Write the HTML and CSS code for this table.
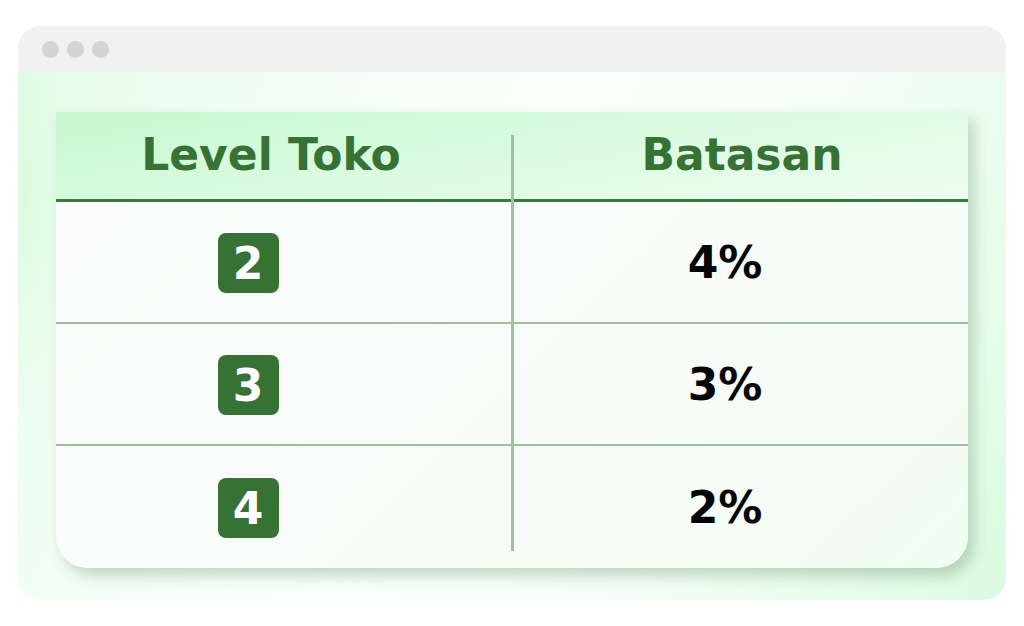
FILE: index.html
```html
<!DOCTYPE html>
<html>
<head>
<meta charset="utf-8">
<link rel="stylesheet" href="styles.css">
</head>
<body>
<div class="page">
  <div class="window">
    <div class="titlebar">
      <span class="dot"></span><span class="dot"></span><span class="dot"></span>
    </div>
    <div class="content">
      <div class="card">
        <div class="row head">
          <div class="cell"><span class="label left">Level Toko</span></div>
          <div class="cell"><span class="label">Batasan</span></div>
        </div>
        <div class="row">
          <div class="cell"><span class="badge">2</span></div>
          <div class="cell"><span class="pct">4%</span></div>
        </div>
        <div class="row">
          <div class="cell"><span class="badge">3</span></div>
          <div class="cell"><span class="pct">3%</span></div>
        </div>
        <div class="row last">
          <div class="cell"><span class="badge">4</span></div>
          <div class="cell"><span class="pct">2%</span></div>
        </div>
        <div class="divider"></div>
      </div>
    </div>
  </div>
</div>
</body>
</html>
```
FILE: styles.css
```css
* { box-sizing: border-box; }
html, body { margin: 0; padding: 0; background: #ffffff; }
body { font-family: "DejaVu Sans", "Liberation Sans", sans-serif; }
.page { width: 1024px; height: 626px; padding: 26px 18px; }
.window {
  width: 988px; height: 574px;
  border-radius: 22px;
  overflow: hidden;
  display: flex; flex-direction: column;
}
.titlebar {
  height: 46px; background: #f1f1f1;
  display: flex; align-items: center; gap: 8px;
  padding-left: 24px;
}
.dot { width: 17px; height: 17px; border-radius: 50%; background: #d4d4d6; }
.content {
  flex: 1;
  padding: 40px 38px 32px 38px;
  background:
    radial-gradient(ellipse 60px 200px at 0px 120px, rgba(214, 250, 222, 0.7), rgba(214, 250, 222, 0) 100%),
    linear-gradient(115deg, #e4fce8 0%, #f3fef5 22%, #f9fffa 45%, #f4fef6 70%, #dbfbe2 100%);
}
.card {
  position: relative;
  height: 456px;
  background: linear-gradient(135deg, #fbfcfb 0%, #f8fcf9 60%, #f1fdf3 100%);
  border-radius: 0 0 32px 32px;
  box-shadow: 6px 8px 14px rgba(60, 110, 70, 0.28);
  display: flex; flex-direction: column;
}
.row {
  display: grid; grid-template-columns: 456px 456px;
  height: 122px; border-bottom: 2px solid #9dc0a0;
}
.row.last { border-bottom: none; }
.row.head {
  height: 90px;
  border-bottom: 3px solid #3b7a3f;
  background: linear-gradient(170deg, #c7f8d0 0%, #dbfbe1 50%, #eefdf0 100%);
}
.cell {
  display: flex; align-items: center; justify-content: center;
  font-weight: 700; font-size: 44px;
}
.label { color: #357234; margin-bottom: 2px; }
.label.left { margin-right: 26px; }
.label:not(.left) { margin-left: 4px; }
.pct { color: #050505; margin-right: 30px; }
.badge {
  width: 61px; height: 60px; border-radius: 8px;
  background: #357234; color: #fff;
  display: flex; align-items: center; justify-content: center;
  margin-right: 72px; margin-top: 2px;
  font-size: 44px; font-weight: 700;
}
.divider {
  position: absolute; left: 455px; top: 23px; bottom: 17px;
  width: 3px; background: #9cc3a0;
}
```
